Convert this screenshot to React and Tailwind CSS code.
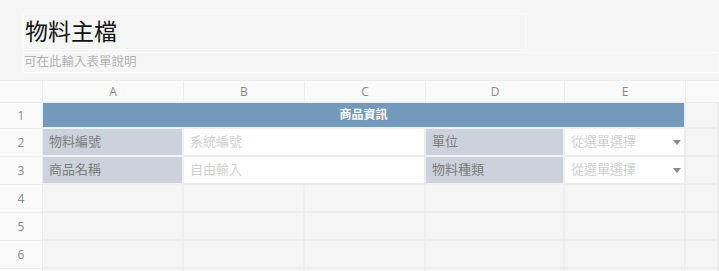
import React from 'react';

const cols = 'grid-cols-[43px_141px_121px_121px_139px_121px_1fr]';

const Caret = () => (
  <svg width="8" height="5" viewBox="0 0 8 5" className="shrink-0">
    <path d="M0 0h8L4 5z" fill="#8a8a8a" />
  </svg>
);

const RowHead = ({ n }) => (
  <div className="flex items-center justify-center border-r border-b border-[#ebebeb] bg-[#fafafa] text-[12px] text-[#888]">
    {n}
  </div>
);

const Label = ({ text }) => (
  <div className="flex items-center border-r-2 border-b-2 border-[#f0f0f0] bg-[#cbd2db] px-[6px] text-[13px] text-[#7d7d7d]">
    {text}
  </div>
);

const Empty = () => <div className="border-r-2 border-b-2 border-[#ededed] bg-[#f5f5f5]" />;

export default function App() {
  const headers = ['A', 'B', 'C', 'D', 'E'];
  return (
    <div className="w-[719px] h-[271px] overflow-hidden bg-[#f5f5f5]" style={{ fontFamily: '"Open Sans", "Noto Sans CJK TC", sans-serif' }}>
      <div className="pt-[13px] pl-[23px]">
        <div className="w-[503px] h-[37px] border border-[#fbfbfb] flex items-center pl-[1px] text-[23px] text-[#111] leading-none">
          物料主檔
        </div>
      </div>
      <div className="mt-[2px] ml-[23px] h-[21px] border border-[#fbfbfb] flex items-center text-[12.5px] text-[#b3b3b3] leading-none">
        可在此輸入表單說明
      </div>
      <div className={`mt-[7px] grid ${cols} grid-rows-[22px_26px_28px_28px_28px_28px_28px_28px] border-t border-[#ececec]`}>
        {/* header */}
        <div className="border-r border-b border-[#ebebeb] bg-[#fafafa]" />
        {headers.map((c) => (
          <div key={c} className="flex items-center justify-center border-r border-b border-[#ebebeb] bg-[#fafafa] text-[12px] text-[#888]">
            {c}
          </div>
        ))}
        <div className="border-b border-[#ebebeb] bg-[#fafafa]" />

        {/* row 1 */}
        <RowHead n="1" />
        <div className="col-span-5 flex items-center justify-center border-r-2 border-b-2 border-[#f0f0f0] bg-[#7399bd] text-[12px] font-bold text-white">
          商品資訊
        </div>
        <Empty />

        {/* row 2 */}
        <RowHead n="2" />
        <Label text="物料編號" />
        <div className="col-span-2 flex items-center border-r-2 border-b-2 border-[#ebebeb] bg-white px-[6px] text-[13px] text-[#cfcfcf]">系統編號</div>
        <Label text="單位" />
        <div className="flex items-center justify-between border-r-2 border-b-2 border-[#ebebeb] bg-white pl-[6px] pr-[3px] text-[13px] text-[#cfcfcf]">
          從選單選擇
          <Caret />
        </div>
        <Empty />

        {/* row 3 */}
        <RowHead n="3" />
        <Label text="商品名稱" />
        <div className="col-span-2 flex items-center border-r-2 border-b-2 border-[#ebebeb] bg-white px-[6px] text-[13px] text-[#cfcfcf]">自由輸入</div>
        <Label text="物料種類" />
        <div className="flex items-center justify-between border-r-2 border-b-2 border-[#ebebeb] bg-white pl-[6px] pr-[3px] text-[13px] text-[#cfcfcf]">
          從選單選擇
          <Caret />
        </div>
        <Empty />

        {['4', '5', '6', ''].map((n, i) => (
          <React.Fragment key={i}>
            <RowHead n={n} />
            <Empty />
            <Empty />
            <Empty />
            <Empty />
            <Empty />
            <Empty />
          </React.Fragment>
        ))}
      </div>
    </div>
  );
}
